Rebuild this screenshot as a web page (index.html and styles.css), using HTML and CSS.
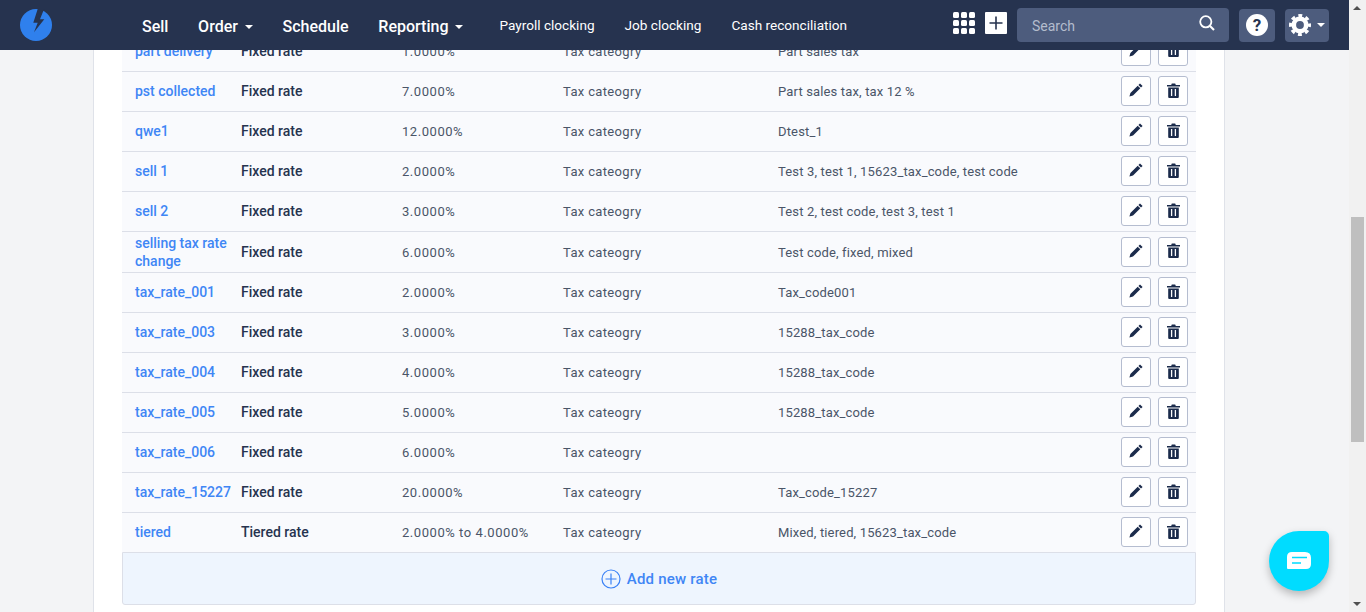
FILE: index.html
```html
<!DOCTYPE html>
<html lang="en">

<head>
    <meta charset="UTF-8" />
    <meta name="viewport" content="width=device-width, initial-scale=1.0" />
    <title>Tax rates</title>
    <link rel="stylesheet" href="styles.css">
</head>

<body>
    <!-- top bar stays over the scrolled page -->
    <header class="topbar">
        <a class="logo" href="#">
            <svg width="32" height="32" viewBox="0 0 32 32">
                <circle cx="16" cy="16" r="16" fill="#2f80ed" />
                <path d="M18 -1 L13.3 13.7 L17.7 13.7 L14 23.3 L24.3 10.3 L20 10.3 L24.5 -1 Z" fill="#26334f" />
            </svg>
        </a>
        <nav class="mainnav">
            <a href="#">Sell</a>
            <a href="#" class="caret">Order</a>
            <a href="#">Schedule</a>
            <a href="#" class="caret">Reporting</a>
        </nav>
        <nav class="subnav">
            <a href="#">Payroll clocking</a>
            <a href="#">Job clocking</a>
            <a href="#">Cash reconciliation</a>
        </nav>
        <div class="tools">
            <svg class="grid-icon" width="22" height="22" viewBox="0 0 22 22" fill="#fff">
                <rect x="0" y="0" width="6" height="6" rx="1.5" />
                <rect x="8" y="0" width="6" height="6" rx="1.5" />
                <rect x="16" y="0" width="6" height="6" rx="1.5" />
                <rect x="0" y="8" width="6" height="6" rx="1.5" />
                <rect x="8" y="8" width="6" height="6" rx="1.5" />
                <rect x="16" y="8" width="6" height="6" rx="1.5" />
                <rect x="0" y="16" width="6" height="6" rx="1.5" />
                <rect x="8" y="16" width="6" height="6" rx="1.5" />
                <rect x="16" y="16" width="6" height="6" rx="1.5" />
            </svg>
            <svg class="plus-icon" width="22" height="22" viewBox="0 0 22 22">
                <rect width="22" height="22" rx="1" fill="#fff" />
                <path d="M11 4.5 V17.5 M4.5 11 H17.5" stroke="#26334f" stroke-width="1.6" />
            </svg>
            <div class="search">
                <span>Search</span>
                <svg width="16" height="16" viewBox="0 0 16 16" fill="none" stroke="#fff" stroke-width="1.8">
                    <circle cx="6.8" cy="6.8" r="5.6" />
                    <path d="M11 11 L15 15" stroke-width="2.2" />
                </svg>
            </div>
            <div class="toolbtn help">
                <svg width="22" height="22" viewBox="0 0 22 22">
                    <circle cx="11" cy="11" r="11" fill="#fff" />
                    <text x="11" y="16.5" class="help-mark">?</text>
                </svg>
            </div>
            <div class="toolbtn settings">
                <svg width="22" height="22" viewBox="0 0 22 22" fill="none" stroke="#fff">
                    <circle cx="11" cy="11" r="6.2" stroke-width="4.6" />
                    <circle cx="11" cy="11" r="9.5" stroke-width="3" stroke-dasharray="3.9 3.56" stroke-dashoffset="1.95" />
                </svg>
                <i class="settings-caret"></i>
            </div>
        </div>
    </header>

    <main class="panel">
        <table class="rates">
            <colgroup>
                <col class="col-name">
                <col class="col-type">
                <col class="col-value">
                <col class="col-cat">
                <col class="col-codes">
                <col>
            </colgroup>
            <tbody id="rows"></tbody>
        </table>
        <a class="add-rate" href="#">
            <svg width="20" height="20" viewBox="0 0 20 20" fill="none" stroke="#3b82f6" stroke-width="1.2">
                <circle cx="10" cy="10" r="9" />
                <path d="M10 4.5 V15.5 M4.5 10 H15.5" />
            </svg>
            Add new rate
        </a>
    </main>

    <div class="scrollbar">
        <i class="arrow-up"></i>
        <div class="thumb"></div>
        <i class="arrow-down"></i>
    </div>

    <div class="chat-bubble">
        <svg width="24" height="18" viewBox="0 0 24 18">
            <path d="M5 0 H18 Q24 0 24 6 V12 Q24 17 19 17 H1 Q0 17 0 16 V5 Q0 0 5 0 Z" fill="#fff" />
            <path d="M5 5.5 H20 M5 11 H14" stroke="#00dcff" stroke-width="1.6" />
        </svg>
    </div>

    <script>
        // rows of the tax rate list
        const rates = [
            ["part delivery", "Fixed rate", "1.0000%", "Part sales tax"],
            ["pst collected", "Fixed rate", "7.0000%", "Part sales tax, tax 12 %"],
            ["qwe1", "Fixed rate", "12.0000%", "Dtest_1"],
            ["sell 1", "Fixed rate", "2.0000%", "Test 3, test 1, 15623_tax_code, test code"],
            ["sell 2", "Fixed rate", "3.0000%", "Test 2, test code, test 3, test 1"],
            ["selling tax rate change", "Fixed rate", "6.0000%", "Test code, fixed, mixed"],
            ["tax_rate_001", "Fixed rate", "2.0000%", "Tax_code001"],
            ["tax_rate_003", "Fixed rate", "3.0000%", "15288_tax_code"],
            ["tax_rate_004", "Fixed rate", "4.0000%", "15288_tax_code"],
            ["tax_rate_005", "Fixed rate", "5.0000%", "15288_tax_code"],
            ["tax_rate_006", "Fixed rate", "6.0000%", ""],
            ["tax_rate_15227", "Fixed rate", "20.0000%", "Tax_code_15227"],
            ["tiered", "Tiered rate", "2.0000% to 4.0000%", "Mixed, tiered, 15623_tax_code"]
        ];

        const pencil = '<svg width="14" height="14" viewBox="0 0 14 14"><path d="M11 0.4 L13.6 3 L12 4.6 L9.4 2 Z M8.7 2.7 L11.3 5.3 L4 12.6 L0.4 13.6 L1.4 10 Z" fill="#1b2b4b"/></svg>';
        const trash = '<svg width="13" height="15" viewBox="0 0 13 15"><path d="M0 2 H4.2 L4.8 0.4 H8.2 L8.8 2 H13 V3.4 H0 Z M1.2 4.4 H11.8 V14 Q11.8 15 10.8 15 H2.2 Q1.2 15 1.2 14 Z" fill="#1b2b4b"/><path d="M4.6 6 V13 M8.4 6 V13" stroke="#fff" stroke-width="1.3"/></svg>';

        const tbody = document.getElementById("rows");
        rates.forEach(function (r) {
            const tr = document.createElement("tr");
            tr.innerHTML =
                '<td class="name"><a href="#">' + r[0] + '</a></td>' +
                '<td class="type">' + r[1] + '</td>' +
                '<td class="value">' + r[2] + '</td>' +
                '<td class="cat">Tax cateogry</td>' +
                '<td class="codes">' + r[3] + '</td>' +
                '<td class="actions"><span class="act">' + pencil + '</span><span class="act">' + trash + '</span></td>';
            tbody.appendChild(tr);
        });
    </script>
</body>

</html>
```

FILE: styles.css
```css
html,
body {
    height: 100%;
}

body {
    margin: 0;
    overflow: hidden;
    background-color: #f3f4f6;
    color: #4a5568;
    font-family: Roboto, "Liberation Sans", sans-serif;
    font-size: 14px;
}

a {
    text-decoration: none;
}

/* top bar */
.topbar {
    position: fixed;
    top: 0;
    left: 0;
    width: 1349px;
    height: 50px;
    display: flex;
    align-items: center;
    background-color: #26334f;
    color: white;
    z-index: 5;
}

.logo {
    display: flex;
    margin-left: 20px;
}

.mainnav {
    display: flex;
    margin-left: 90px;
    margin-top: 2px;
    gap: 29.7px;
}

.mainnav a {
    color: white;
    font-size: 16px;
    font-weight: 500;
}

.caret::after {
    content: "";
    display: inline-block;
    margin-left: 7px;
    vertical-align: middle;
    border-left: 4.5px solid transparent;
    border-right: 4.5px solid transparent;
    border-top: 4px solid white;
}

.subnav {
    display: flex;
    margin-left: 36px;
    gap: 30px;
}

.subnav a {
    color: white;
    font-size: 13.6px;
}

.tools {
    display: flex;
    align-items: center;
    margin-left: auto;
    margin-right: 20px;
}

.grid-icon {
    margin-right: 10px;
    margin-top: -4px;
}

.plus-icon {
    margin-right: 10px;
    margin-top: -4px;
}

.search {
    width: 212px;
    height: 34px;
    box-sizing: border-box;
    padding: 0 14px 0 15px;
    display: flex;
    align-items: center;
    justify-content: space-between;
    border-radius: 4px;
    background-color: #4d5c7d;
    color: #b4bccd;
    margin-right: 10px;
}

.search span {
    padding-top: 2px;
}

.search svg {
    margin-top: -5px;
}

.toolbtn {
    height: 33px;
    display: flex;
    align-items: center;
    justify-content: center;
    border-radius: 4px;
    background-color: #4d5c7d;
}

.help {
    width: 36px;
    margin-right: 10px;
}

.help-mark {
    fill: #26334f;
    font-size: 17px;
    font-weight: 700;
    text-anchor: middle;
}

.settings {
    width: 44px;
    justify-content: flex-start;
    padding-left: 4px;
    box-sizing: border-box;
}

.settings-caret {
    margin-left: 6px;
    border-left: 4px solid transparent;
    border-right: 4px solid transparent;
    border-top: 4px solid white;
}

/* white sheet with the table */
.panel {
    box-sizing: border-box;
    width: 1132px;
    height: 612px;
    margin-left: 93px;
    padding: 31px 28px 0 28px;
    background-color: white;
    border-left: 1px solid #dfe2e9;
    border-right: 1px solid #dfe2e9;
}

.rates {
    width: 1074px;
    table-layout: fixed;
    border-collapse: collapse;
    background-color: #f9fafd;
}

.col-name {
    width: 119px;
}

.col-type {
    width: 161px;
}

.col-value {
    width: 161px;
}

.col-cat {
    width: 215px;
}

.col-codes {
    width: 320px;
}

.rates tr {
    height: 40px;
    border-bottom: 1px solid #dcdfe8;
}

.rates tr:last-child {
    border-bottom: none;
}

.rates td {
    padding: 2px 0 0 0;
    line-height: 18px;
    font-size: 13px;
}

.rates .name {
    padding: 2px 8px 2px 13px;
    font-size: 14px;
    font-weight: 500;
}

.name a {
    color: #3f86f5;
}

.rates .type {
    padding: 0;
    color: #26334f;
    font-size: 14px;
    font-weight: 500;
}

.rates .value {
    letter-spacing: 0.55px;
}

.rates .cat {
    letter-spacing: 0.35px;
}

.rates .codes {
    letter-spacing: 0.15px;
}

.rates .actions {
    text-align: right;
    padding: 0 8px 0 0;
    white-space: nowrap;
}

.act {
    display: inline-flex;
    align-items: center;
    justify-content: center;
    width: 28px;
    height: 28px;
    margin-left: 7px;
    vertical-align: middle;
    border: 1px solid #b5bdd0;
    border-radius: 3px;
    background-color: white;
}

.act svg {
    margin-top: -2px;
}

.add-rate {
    display: flex;
    align-items: center;
    justify-content: center;
    gap: 6px;
    height: 51px;
    border: 1px solid #dcdfe8;
    border-radius: 0 0 3px 3px;
    background-color: #eef5fe;
    color: #3f86f5;
    font-size: 15px;
    font-weight: 500;
    letter-spacing: 0.2px;
}

/* page scrollbar, painted because the shot shows it */
.scrollbar {
    position: fixed;
    top: 0;
    right: 0;
    width: 17px;
    height: 612px;
    background-color: #f1f1f1;
    z-index: 6;
}

.thumb {
    position: absolute;
    top: 217px;
    left: 2px;
    width: 13px;
    height: 225px;
    background-color: #bfbfbf;
}

.arrow-up,
.arrow-down {
    position: absolute;
    left: 4px;
    border-left: 4px solid transparent;
    border-right: 4px solid transparent;
}

.arrow-up {
    top: 6px;
    border-bottom: 4px solid #505050;
}

.arrow-down {
    bottom: 6px;
    border-top: 4px solid #505050;
}

.chat-bubble {
    position: fixed;
    left: 1269px;
    top: 531px;
    width: 60px;
    height: 60px;
    display: flex;
    align-items: center;
    justify-content: center;
    border-radius: 30px 5px 30px 30px;
    background-color: #00dcff;
    box-shadow: 0 4px 8px rgba(0, 0, 0, 0.25);
    z-index: 6;
}
```
